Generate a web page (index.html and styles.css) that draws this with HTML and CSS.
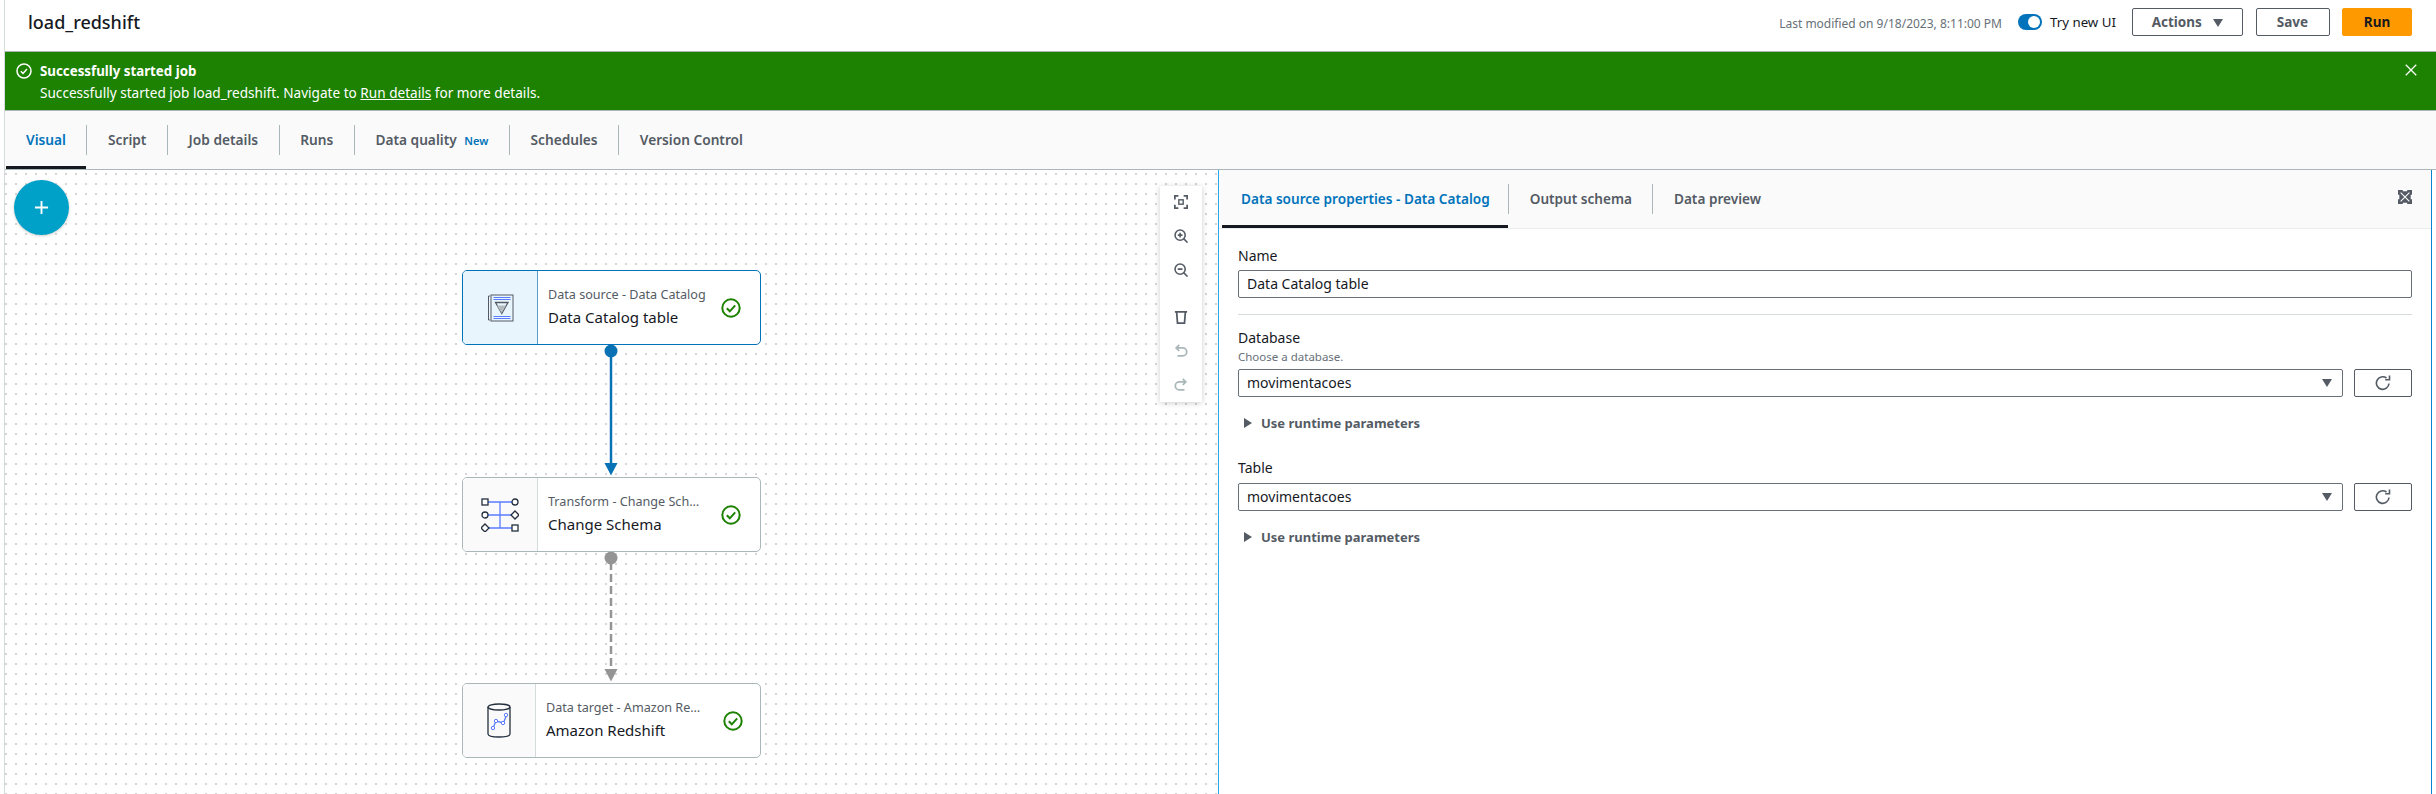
FILE: index.html
```html
<!DOCTYPE html>
<html lang="en">
<head>
    <meta charset="UTF-8">
    <meta name="viewport" content="width=device-width, initial-scale=1.0">
    <title>load_redshift</title>
    <link rel="stylesheet" href="styles.css">
</head>
<body>
<div class="page">
    <!-- Header -->
    <header class="job-header">
        <h1 class="job-name">load_redshift</h1>
        <div class="job-actions">
            <span class="modified">Last modified on 9/18/2023, 8:11:00 PM</span>
            <span class="toggle"><span class="toggle-knob"></span></span>
            <span class="toggle-label">Try new UI</span>
            <button class="btn btn-actions">Actions <span class="caret"></span></button>
            <button class="btn btn-save">Save</button>
            <button class="btn btn-run">Run</button>
        </div>
    </header>

    <!-- Flash -->
    <section class="flash">
        <svg class="flash-icon" viewBox="0 0 16 16"><circle cx="8" cy="8" r="7" fill="none" stroke="#fff" stroke-width="1.5"/><path d="M4.8 8.2l2.2 2.2 4-4.4" fill="none" stroke="#fff" stroke-width="1.5"/></svg>
        <div class="flash-text">
            <div class="flash-title">Successfully started job</div>
            <div class="flash-body">Successfully started job load_redshift. Navigate to <a href="#">Run details</a> for more details.</div>
        </div>
        <svg class="flash-close" viewBox="0 0 16 16"><path d="M2 2l12 12M14 2L2 14" fill="none" stroke="#fff" stroke-width="1.5"/></svg>
    </section>

    <!-- Main tabs -->
    <nav class="main-tabs">
        <a class="main-tab active">Visual</a>
        <a class="main-tab">Script</a>
        <a class="main-tab">Job details</a>
        <a class="main-tab">Runs</a>
        <a class="main-tab">Data quality <span class="new-tag">New</span></a>
        <a class="main-tab">Schedules</a>
        <a class="main-tab last">Version Control</a>
    </nav>

    <div class="workspace">
        <!-- Canvas -->
        <main class="canvas">
            <button class="add-btn"><svg viewBox="0 0 16 16"><path d="M8 1v14M1 8h14" fill="none" stroke="#fff" stroke-width="2"/></svg></button>

            <svg class="edges" width="1213" height="624">
                <circle cx="606" cy="181" r="6.5" fill="#0972b5"/>
                <path d="M606 181V295" stroke="#0972b5" stroke-width="2.5" fill="none"/>
                <path d="M599.500 293h13l-6.500 12.500z" fill="#0972b5"/>
                <circle cx="606" cy="388" r="6.500" fill="#949494"/>
                <path d="M606 392V500" stroke="#949494" stroke-width="2.5" stroke-dasharray="8 4" fill="none"/>
                <path d="M599.500 499h13l-6.500 12.500z" fill="#949494"/>
            </svg>

            <article class="node selected node-1">
                <div class="node-icon">
                    <svg viewBox="0 0 28 28" width="28" height="28">
                        <path d="M4 2H2.500V26H4" fill="none" stroke="#545b64"/>
                        <rect x="5" y="1" width="22" height="26" fill="none" stroke="#545b64"/>
                        <path d="M7.500 3.500h17M7.500 5.500h17M7.500 22.500h17M7.500 24.500h17" stroke="#5a7dff"/>
                        <path d="M9.500 8.500h12.500l-6.200 11z" fill="none" stroke="#545b64" stroke-width="1.300"/>
                        <path d="M11 11.500h9l-4.500 7.500z" fill="#b4bcc0"/>
                    </svg>
                </div>
                <div class="node-text">
                    <div class="node-type">Data source - Data Catalog</div>
                    <div class="node-name">Data Catalog table</div>
                </div>
                <svg class="node-check" viewBox="0 0 20 20"><circle cx="10" cy="10" r="8.700" fill="none" stroke="#1d8102" stroke-width="2"/><path d="M5.800 10.300l3 3 5.400-6" fill="none" stroke="#1d8102" stroke-width="2"/></svg>
            </article>

            <article class="node node-2">
                <div class="node-icon">
                    <svg viewBox="0 0 38 34" width="38" height="34">
                        <path d="M6 4h26M6 17h26M6 30h26M19 4v26" stroke="#5a7dff" stroke-width="1.300"/>
                        <rect x="1" y="1" width="6" height="6" fill="#fff" stroke="#232f3e" stroke-width="1.300"/>
                        <circle cx="34" cy="4" r="3" fill="#fff" stroke="#232f3e" stroke-width="1.300"/>
                        <circle cx="4" cy="17" r="3" fill="#fff" stroke="#232f3e" stroke-width="1.300"/>
                        <path d="M34 13l4 4-4 4-4-4z" fill="#fff" stroke="#232f3e" stroke-width="1.300"/>
                        <path d="M4 26l4 4-4 4-4-4z" fill="#fff" stroke="#232f3e" stroke-width="1.300"/>
                        <rect x="31" y="27" width="6" height="6" fill="#fff" stroke="#232f3e" stroke-width="1.300"/>
                    </svg>
                </div>
                <div class="node-text">
                    <div class="node-type">Transform - Change Schema</div>
                    <div class="node-name">Change Schema</div>
                </div>
                <svg class="node-check" viewBox="0 0 20 20"><circle cx="10" cy="10" r="8.700" fill="none" stroke="#1d8102" stroke-width="2"/><path d="M5.800 10.300l3 3 5.400-6" fill="none" stroke="#1d8102" stroke-width="2"/></svg>
            </article>

            <article class="node node-3">
                <div class="node-icon">
                    <svg viewBox="0 0 24 35" width="24" height="35">
                        <path d="M1 4v27c0 1.700 4.500 3 11 3s11-1.300 11-3V4" fill="none" stroke="#232f3e" stroke-width="1.300"/>
                        <ellipse cx="12" cy="4" rx="11" ry="3" fill="none" stroke="#232f3e" stroke-width="1.300"/>
                        <path d="M6 25l3-7 7.500 2 3-8" fill="none" stroke="#5a7dff" stroke-width="1.300"/>
                        <circle cx="6" cy="25" r="1.700" fill="#fff" stroke="#5a7dff"/>
                        <circle cx="9" cy="18" r="1.700" fill="#fff" stroke="#5a7dff"/>
                        <circle cx="16" cy="20" r="1.700" fill="#fff" stroke="#5a7dff"/>
                        <circle cx="19" cy="12" r="1.700" fill="#fff" stroke="#5a7dff"/>
                    </svg>
                </div>
                <div class="node-text">
                    <div class="node-type">Data target - Amazon Redshift</div>
                    <div class="node-name">Amazon Redshift</div>
                </div>
                <svg class="node-check" viewBox="0 0 20 20"><circle cx="10" cy="10" r="8.700" fill="none" stroke="#1d8102" stroke-width="2"/><path d="M5.800 10.300l3 3 5.400-6" fill="none" stroke="#1d8102" stroke-width="2"/></svg>
            </article>

            <div class="toolbar">
                <svg viewBox="0 0 16 16"><path d="M1 5V1h4M11 1h4v4M15 11v4h-4M5 15H1v-4" fill="none" stroke="#545b64" stroke-width="2"/><rect x="5.500" y="5.500" width="5" height="5" fill="none" stroke="#545b64" stroke-width="1.600"/></svg>
                <svg viewBox="0 0 16 16"><circle cx="7" cy="7" r="5.800" fill="none" stroke="#545b64" stroke-width="1.800"/><path d="M11 11l4.500 4.500M4.300 7h5.400M7 4.300v5.400" fill="none" stroke="#545b64" stroke-width="1.800"/></svg>
                <svg viewBox="0 0 16 16"><circle cx="7" cy="7" r="5.800" fill="none" stroke="#545b64" stroke-width="1.800"/><path d="M11 11l4.500 4.500M4.300 7h5.400" fill="none" stroke="#545b64" stroke-width="1.800"/></svg>
                <svg class="tool-gap" viewBox="0 0 16 16"><path d="M1 2h14M3 2l1 13h8l1-13" fill="none" stroke="#545b64" stroke-width="2"/></svg>
                <svg viewBox="0 0 16 16"><path d="M6 1L2.500 4.500 6 8M3 4.500h7a4 4 0 0 1 0 9H4" fill="none" stroke="#aab7b8" stroke-width="2"/></svg>
                <svg viewBox="0 0 16 16"><path d="M10 1l3.500 3.500L10 8M13 4.500H6a4 4 0 0 0 0 9h6" fill="none" stroke="#aab7b8" stroke-width="2"/></svg>
            </div>
        </main>

        <!-- Properties -->
        <aside class="panel">
            <div class="panel-tabs">
                <a class="panel-tab active">Data source properties - Data Catalog</a>
                <a class="panel-tab">Output schema</a>
                <a class="panel-tab last">Data preview</a>
                <svg class="expand" viewBox="0 0 16 16"><rect width="16" height="16" fill="#545b64"/><path d="M3 3l10 10M13 3L3 13" fill="none" stroke="#fff" stroke-width="1.200"/><path d="M5.500 0h5v1.500h-5zM5.500 14.500h5V16h-5zM0 5.500h1.500v5H0zM14.500 5.500H16v5h-1.500z" fill="#fff"/></svg>
            </div>
            <form class="panel-body">
                <label class="field-label">Name</label>
                <div class="input">Data Catalog table</div>
                <hr class="divider">

                <label class="field-label">Database</label>
                <div class="hint">Choose a database.</div>
                <div class="select-row">
                    <div class="input select">movimentacoes<span class="caret"></span></div>
                    <button type="button" class="refresh"><svg viewBox="0 0 16 16"><path d="M14 8.500A6.300 6.300 0 1 1 11.500 3" fill="none" stroke="#545b64" stroke-width="1.600"/><path d="M14.500 0.500V4.800H10.200" fill="none" stroke="#545b64" stroke-width="1.600"/></svg></button>
                </div>
                <div class="expander"><span class="tri"></span>Use runtime parameters</div>

                <label class="field-label label-table">Table</label>
                <div class="select-row">
                    <div class="input select">movimentacoes<span class="caret"></span></div>
                    <button type="button" class="refresh"><svg viewBox="0 0 16 16"><path d="M14 8.500A6.300 6.300 0 1 1 11.500 3" fill="none" stroke="#545b64" stroke-width="1.600"/><path d="M14.500 0.500V4.800H10.200" fill="none" stroke="#545b64" stroke-width="1.600"/></svg></button>
                </div>
                <div class="expander"><span class="tri"></span>Use runtime parameters</div>
            </form>
        </aside>
    </div>
</div>
</body>
</html>
```

FILE: styles.css
```css
* {
    margin: 0;
    padding: 0;
    box-sizing: border-box;
}

html, body {
    height: 794px;
    overflow: hidden;
    background: #fff;
}

body {
    font-family: "Noto Sans", Arial, sans-serif;
    font-size: 14px;
    color: #16191f;
}

.page {
    margin: 0 0 0 4px;
    border-left: 1px solid #d5dbdb;
    height: 794px;
    display: flex;
    flex-direction: column;
}

/* Header */
.job-header {
    height: 52px;
    flex: none;
    display: flex;
    align-items: center;
    justify-content: space-between;
    padding: 0 24px 8px 23px;
    border-bottom: 1px solid #aab7b8;
}

.job-name {
    font-size: 18px;
    font-weight: 500;
}

.job-actions {
    display: flex;
    align-items: center;
}

.modified {
    font-size: 12px;
    color: #687078;
    margin: 3px 16px 0 0;
}

.toggle {
    width: 24px;
    height: 16px;
    border-radius: 8px;
    background: #0073bb;
    position: relative;
    margin-right: 8px;
}

.toggle-knob {
    position: absolute;
    right: 2px;
    top: 2px;
    width: 12px;
    height: 12px;
    border-radius: 50%;
    background: #fff;
}

.toggle-label {
    font-size: 13.3px;
    margin-right: 16px;
}

.btn {
    height: 28px;
    border: 1px solid #545b64;
    border-radius: 2px;
    background: #fff;
    color: #545b64;
    font: 700 13.5px "Noto Sans", Arial, sans-serif;
    margin-left: 12.5px;
}

.btn-actions {
    width: 111px;
    margin-left: 0;
}

.btn-save {
    width: 74px;
}

.btn-run {
    width: 70px;
    background: #f90;
    border-color: #f90;
    color: #16191f;
}

.caret {
    display: inline-block;
    width: 0;
    height: 0;
    border-left: 5.5px solid transparent;
    border-right: 5.5px solid transparent;
    border-top: 8px solid #545b64;
    margin-left: 8px;
}

/* Flash */
.flash {
    height: 59px;
    flex: none;
    background: #1d8102;
    color: #fff;
    border-bottom: 1px solid #aab7b8;
    display: flex;
    padding: 11px 18px 0 11px;
}

.flash-icon {
    width: 16px;
    height: 16px;
    flex: none;
}

.flash-text {
    margin-left: 8px;
    flex: 1;
    font-size: 13.6px;
}

.flash-title {
    font-size: 13.3px;
    font-weight: 700;
    line-height: 16px;
}

.flash-body {
    line-height: 16px;
    margin-top: 6px;
}

.flash-body a {
    color: #fff;
}

.flash-close {
    width: 14px;
    height: 14px;
    flex: none;
}

/* Tabs */
.main-tabs {
    height: 59px;
    flex: none;
    background: #fafafa;
    border-bottom: 1px solid #aab7b8;
    display: flex;
    align-items: center;
    padding-left: 1px;
}

.main-tab {
    height: 30px;
    line-height: 30px;
    padding: 0 20.6px;
    font-size: 13.7px;
    font-weight: 600;
    color: #545b64;
    border-right: 1px solid #aab7b8;
    position: relative;
    white-space: nowrap;
}

.main-tab.last {
    border-right: 0;
}

.main-tab.active {
    color: #0073bb;
    padding-left: 20px;
}

.main-tab.active::after {
    content: "";
    position: absolute;
    left: 0;
    right: 0;
    bottom: -14px;
    height: 3px;
    background: #16191f;
}

.new-tag {
    color: #0073bb;
    font-size: 11px;
    margin-left: 4px;
}

/* Canvas */
.workspace {
    flex: 1;
    display: flex;
    min-height: 0;
}

.canvas {
    width: 1213px;
    flex: none;
    position: relative;
    overflow: hidden;
    background-color: #fff;
    background-image: radial-gradient(#d5d5d5 0.9px, transparent 1.1px);
    background-size: 10px 10px;
    background-position: -4px -1px;
}

.add-btn {
    position: absolute;
    left: 9px;
    top: 10px;
    width: 55px;
    height: 55px;
    border-radius: 50%;
    border: 0;
    background: #00a1c9;
    box-shadow: 0 1px 3px rgba(0, 0, 0, 0.2);
    display: flex;
    align-items: center;
    justify-content: center;
}

.add-btn svg {
    width: 15px;
    height: 15px;
}

.edges {
    position: absolute;
    left: 0;
    top: 0;
}

.node {
    position: absolute;
    left: 457px;
    width: 299px;
    height: 75px;
    display: flex;
    align-items: center;
    background: #fff;
    border: 1.5px solid #aab7b8;
    border-radius: 5px;
    overflow: hidden;
}

.node-1 { top: 100px; }
.node-2 { top: 307px; }
.node-3 { top: 513px; }

.node.selected {
    border-color: #0073bb;
}

.node-icon {
    width: 75px;
    height: 100%;
    flex: none;
    display: flex;
    align-items: center;
    justify-content: center;
    background: #fafafa;
    border-right: 1.5px solid #d5dbdb;
}

.node.selected .node-icon {
    background: #e8f5fd;
    border-right-color: #5a9ac7;
}

.node-3 .node-icon {
    width: 73px;
}

.node-text {
    flex: 1;
    min-width: 0;
    padding: 0 0 3px 10px;
}

.node-type {
    font-size: 12.6px;
    color: #545b64;
    white-space: nowrap;
    overflow: hidden;
    text-overflow: ellipsis;
}

.node-name {
    font-size: 15px;
    margin-top: 4px;
    white-space: nowrap;
}

.node-check {
    width: 20px;
    height: 20px;
    flex: none;
    margin: 0 19px 0 13px;
}

.node-2 .node-check {
    margin-left: 19px;
}

.node-3 .node-check {
    margin: 0 17px 0 21px;
}

.toolbar {
    position: absolute;
    left: 1155px;
    top: 16px;
    width: 42px;
    height: 216px;
    background: #fff;
    box-shadow: 0 1px 6px rgba(0, 0, 0, 0.2);
    display: flex;
    flex-direction: column;
    align-items: center;
    padding-top: 9px;
}

.toolbar svg {
    width: 14px;
    height: 14px;
    margin-bottom: 20px;
    flex: none;
}

.toolbar .tool-gap {
    margin-top: 13px;
}

/* Panel */
.panel {
    width: 1214px;
    flex: none;
    border-left: 1.5px solid #29a8f0;
    border-right: 1.5px solid #0a84d0;
    background: #fff;
}

.panel-tabs {
    height: 59px;
    background: #fafafa;
    border-bottom: 1px solid #eaeded;
    display: flex;
    align-items: center;
    padding-left: 3px;
    position: relative;
}

.panel-tab {
    height: 30px;
    line-height: 30px;
    padding: 0 20px 0 21px;
    font-size: 13.6px;
    font-weight: 600;
    color: #545b64;
    border-right: 1px solid #aab7b8;
    position: relative;
    white-space: nowrap;
}

.panel-tab.last {
    border-right: 0;
}

.panel-tab.active {
    color: #0073bb;
    padding: 0 18px 0 19px;
}

.panel-tab.active::after {
    content: "";
    position: absolute;
    left: 0;
    right: 0;
    bottom: -14px;
    height: 3px;
    background: #16191f;
}

.expand {
    position: absolute;
    right: 19px;
    top: 20px;
    width: 14px;
    height: 14px;
}

.panel-body {
    padding: 17px 19px 0 19px;
}

.field-label {
    display: block;
    font-size: 14px;
    line-height: 20px;
    margin-bottom: 4px;
}

.input {
    height: 28px;
    line-height: 26px;
    border: 1px solid #687078;
    border-radius: 2px;
    padding: 0 8px;
    font-size: 14px;
}

.divider {
    border: 0;
    border-top: 1px solid #d5dbdb;
    margin: 16px 0 13px;
}

.hint {
    font-size: 11.5px;
    color: #687078;
    line-height: 14px;
    margin: -2px 0 5px;
}

.select-row {
    display: flex;
    gap: 11px;
}

.select {
    flex: 1;
    position: relative;
}

.select .caret {
    position: absolute;
    right: 10px;
    top: 9px;
    margin: 0;
}

.refresh {
    width: 58px;
    height: 28px;
    flex: none;
    background: #fff;
    border: 1px solid #545b64;
    border-radius: 2px;
    display: flex;
    align-items: center;
    justify-content: center;
}

.refresh svg {
    width: 16px;
    height: 16px;
}

.expander {
    font-size: 13px;
    font-weight: 700;
    color: #545b64;
    line-height: 18px;
    margin-top: 17px;
    padding-left: 6px;
    display: flex;
    align-items: center;
}

.tri {
    width: 0;
    height: 0;
    border-top: 5px solid transparent;
    border-bottom: 5px solid transparent;
    border-left: 8px solid #545b64;
    margin-right: 9px;
}

.label-table {
    margin-top: 26px;
    margin-bottom: 5px;
}
```
